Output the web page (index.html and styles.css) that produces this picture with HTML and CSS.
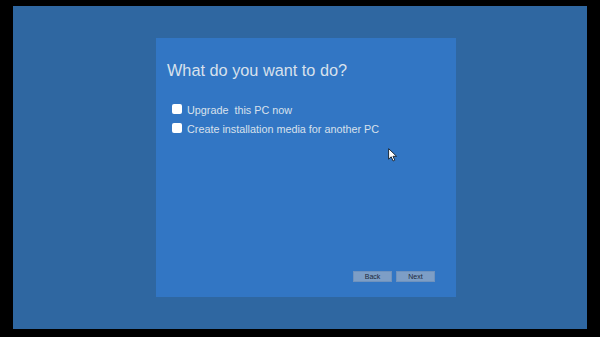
FILE: index.html
```html
<!DOCTYPE html>
<html lang="en">
<head>
    <meta charset="UTF-8">
    <meta name="viewport" content="width=device-width, initial-scale=1.0">
    <title>Setup</title>
    <link rel="stylesheet" href="styles.css">
</head>
<body>
    <div class="screen">
        <!-- Setup dialog -->
        <div class="setup-panel">
            <h1>What do you want to do?</h1>
            <div class="options">
                <label class="option"><input type="checkbox"> <span>Upgrade&nbsp; this PC now</span></label>
                <label class="option"><input type="checkbox"> <span>Create installation media for another PC</span></label>
            </div>
            <div class="actions">
                <button>Back</button>
                <button>Next</button>
            </div>
        </div>

        <!-- Mouse pointer -->
        <svg class="cursor" width="10" height="14" viewBox="0 0 10 14">
            <path d="M0.6 0.6 L0.6 11.2 L3.2 8.8 L5.1 13 L6.8 12.2 L5 8.3 L8.6 8.3 Z" fill="#fff" stroke="#1b2a3a" stroke-width="1" stroke-linejoin="round"/>
        </svg>
    </div>
</body>
</html>
```

FILE: styles.css
```css
html, body {
    margin: 0;
    background-color: #000;
}
body {
    font-family: "Liberation Sans", Arial, sans-serif;
    padding: 6px 13px 8px 13px;
}
.screen {
    position: relative;
    height: 323px;
    background-color: #2f67a1;
    padding: 32px 0 0 143px;
    box-sizing: border-box;
}
.setup-panel {
    width: 300px;
    height: 259px;
    background-color: #3276c4;
    box-sizing: border-box;
    padding: 22px 21px 15px 11px;
    display: flex;
    flex-direction: column;
}
.setup-panel h1 {
    margin: 0;
    font-size: 16.3px;
    line-height: 20px;
    font-weight: normal;
    color: #d8e1ec;
}
.options {
    margin-top: 20px;
    padding-left: 5px;
    display: flex;
    flex-direction: column;
}
.option {
    display: flex;
    align-items: center;
    height: 19px;
    font-size: 10.8px;
    color: #d8e1ec;
}
.option input {
    appearance: none;
    -webkit-appearance: none;
    margin: 0 5px 0 0;
    width: 10px;
    height: 10px;
    border-radius: 2px;
    background-color: #fff;
    border: none;
    position: relative;
    top: -1px;
}
.actions {
    margin-top: auto;
    display: flex;
    justify-content: flex-end;
    gap: 4px;
}
.actions button {
    width: 39px;
    height: 11px;
    padding: 0;
    border: 1px solid #6f92bd;
    background-color: #7d9ec6;
    color: #1c2a3a;
    font-family: "Liberation Sans", Arial, sans-serif;
    font-size: 7px;
    line-height: 9px;
}
.cursor {
    position: absolute;
    left: 375px;
    top: 142px;
}
```
